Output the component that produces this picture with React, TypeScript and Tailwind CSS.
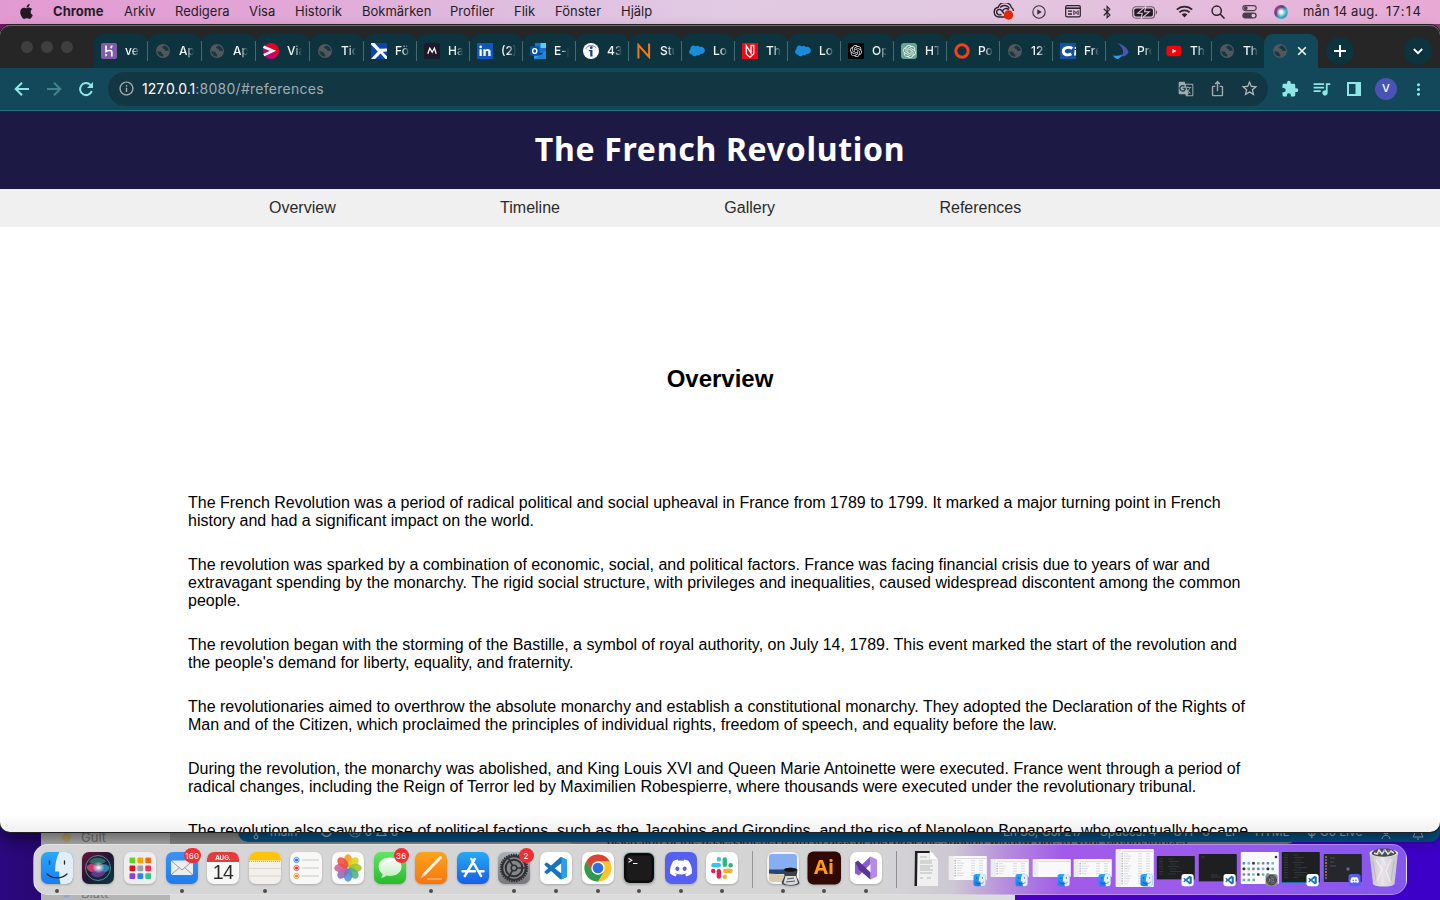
import React from 'react';
import { FaApple, FaBluetoothB, FaDiscord, FaYoutube } from 'react-icons/fa';
import { SiOpenai } from 'react-icons/si';
import { MdExtension, MdGTranslate, MdInfoOutline, MdIosShare, MdMoreVert, MdQueueMusic, MdStarBorder } from 'react-icons/md';

const VSCODE =
  'M23.15 2.587L18.21.21a1.494 1.494 0 0 0-1.705.29l-9.46 8.63-4.12-3.128a.999.999 0 0 0-1.276.057L.327 7.261A1 1 0 0 0 .326 8.74L3.899 12 .326 15.26a1 1 0 0 0 .001 1.479L1.65 17.94a.999.999 0 0 0 1.276.057l4.12-3.128 9.46 8.63a1.492 1.492 0 0 0 1.704.29l4.942-2.377A1.5 1.5 0 0 0 24 20.06V3.939a1.5 1.5 0 0 0-.85-1.352zm-5.146 14.861L10.826 12l7.178-5.448v10.896z';

/* ---------- menu bar ---------- */

const MENUS: [string, string][] = [
  ['Chrome', 'w-[71px] font-bold tracking-[0.05px]'],
  ['Arkiv', 'w-[51px]'],
  ['Redigera', 'w-[74px]'],
  ['Visa', 'w-[46px]'],
  ['Historik', 'w-[67px]'],
  ['Bokmärken', 'w-[88px]'],
  ['Profiler', 'w-[64px]'],
  ['Flik', 'w-[41px]'],
  ['Fönster', 'w-[66px]'],
  ['Hjälp', 'w-[40px]'],
];

function CreativeCloud() {
  return (
    <svg width="22" height="17" viewBox="0 0 22 17" fill="none" stroke="#2b222b" strokeWidth="1.4">
      <path d="M13 14H6A4.900 4.900 0 0 1 5.200 4.300 7 7 0 0 1 18.500 4.500c1.200.900 1.900 2 2 3.500" />
      <path d="M8.500 11.300c-2.500 1.400-5.100-.3-4.900-2.500.3-2.600 3.500-3.200 5-1.300l2.400 3M7.200 4.500c2.500-3 7.500-2.600 9.200 1M9.500 8c1-2.600 4.300-3.200 6.200-1.300" />
      <circle cx="15.500" cy="12" r="4.700" fill="#e3260c" stroke="none" />
    </svg>
  );
}

function PlayCircle() {
  return (
    <svg width="14" height="14" viewBox="0 0 14 14">
      <circle cx="7" cy="7" r="6.200" fill="none" stroke="#3a2f3a" strokeWidth="1.100" />
      <path d="M5.300 4.300v5.400L9.800 7z" fill="#3a2f3a" />
    </svg>
  );
}

function InputPanel() {
  return (
    <svg width="16" height="13" viewBox="0 0 16 13" fill="none" stroke="#2b222b">
      <rect x=".7" y=".7" width="14.600" height="11.200" rx="1.400" strokeWidth="1.200" />
      <path d="M1 3.200h14" strokeWidth="1.600" />
      <path d="M3 6.200h4M3 9h4" strokeWidth="1.300" />
      <path d="M9 5.600l4 4M13 5.600l-4 4M8.800 5.600v4M13.200 5.600v4" strokeWidth=".9" />
    </svg>
  );
}

function Battery() {
  return (
    <svg width="26" height="13" viewBox="0 0 26 13">
      <rect x=".6" y=".8" width="22" height="11.400" rx="3.400" fill="none" stroke="#6b5a69" strokeWidth="1.100" />
      <rect x="2.300" y="2.500" width="18.600" height="8" rx="1.800" fill="#231b23" />
      <path d="M23.800 4.600c1 .4 1.400 1.100 1.400 1.900s-.4 1.500-1.400 1.900z" fill="#6b5a69" />
      <path d="M13.800.4L5.800 7.200h4.400L9.200 12.600l8-6.800h-4.600z" fill="#231b23" stroke="#e3c5e0" strokeWidth="1.100" />
    </svg>
  );
}

function Wifi() {
  return (
    <svg width="17" height="13" viewBox="0 0 17 13" fill="none" stroke="#2b222b" strokeWidth="1.700">
      <path d="M.8 4.700a11 11 0 0 1 15.400 0M3.400 7.400a7.300 7.300 0 0 1 10.200 0" />
      <path d="M8.500 12.400L5.700 9.500a4 4 0 0 1 5.600 0z" fill="#2b222b" stroke="none" />
    </svg>
  );
}

function SearchGlass() {
  return (
    <svg width="14" height="14" viewBox="0 0 14 14" fill="none" stroke="#2b222b" strokeWidth="1.500" strokeLinecap="round">
      <circle cx="5.700" cy="5.700" r="4.600" />
      <path d="M9.100 9.100l3.900 4" />
    </svg>
  );
}

function ControlCenter() {
  return (
    <svg width="15" height="14" viewBox="0 0 15 14">
      <rect x=".8" y=".6" width="13.400" height="5" rx="2.500" fill="none" stroke="#4a3d49" strokeWidth="1.100" />
      <circle cx="3.800" cy="3.100" r="1.900" fill="#4a3d49" />
      <rect x=".3" y="7.600" width="14.400" height="6" rx="3" fill="#4a3d49" />
      <circle cx="11.400" cy="10.600" r="1.900" fill="#e3c3de" />
    </svg>
  );
}

function SiriSmall() {
  return (
    <svg width="14" height="14" viewBox="0 0 14 14">
      <defs>
        <linearGradient id="siriS" x1="0" y1="0" x2="1" y2="1">
          <stop offset="0" stopColor="#e2508c" />
          <stop offset=".35" stopColor="#5a3a7e" />
          <stop offset=".65" stopColor="#33c2c0" />
          <stop offset="1" stopColor="#5467d8" />
        </linearGradient>
        <radialGradient id="siriSG">
          <stop offset="0" stopColor="#fff" />
          <stop offset=".4" stopColor="#fff" stopOpacity=".8" />
          <stop offset="1" stopColor="#fff" stopOpacity="0" />
        </radialGradient>
      </defs>
      <circle cx="7" cy="7" r="6.900" fill="url(#siriS)" />
      <circle cx="7" cy="7" r="5" fill="url(#siriSG)" />
    </svg>
  );
}

function MenuBar() {
  return (
    <div className="flex h-[24px] w-full items-center bg-[linear-gradient(90deg,#e29bd2_0%,#e2a4d6_18%,#dfbcdf_34%,#e1cae3_50%,#e2c8e1_68%,#e5bbdc_85%,#e8a9d5_100%)] pb-[2px] text-[13px] leading-[22px] text-[#261c26]">
      <div className="flex w-[53px] justify-center"><FaApple size={17} color="#211a21" /></div>
      {MENUS.map(([t, c]) => (
        <span key={t} className={c}>{t}</span>
      ))}
      <div className="ml-auto flex items-center">
        <div className="flex w-[37px] justify-center"><CreativeCloud /></div>
        <div className="flex w-[34px] justify-center pt-[2px]"><PlayCircle /></div>
        <div className="flex w-[34px] justify-center pt-[1px]"><InputPanel /></div>
        <div className="flex w-[34px] justify-center pt-[2px]"><FaBluetoothB size={14} color="#2b222b" /></div>
        <div className="flex w-[41px] justify-center pt-[2px]"><Battery /></div>
        <div className="flex w-[38px] justify-center pt-[1px]"><Wifi /></div>
        <div className="flex w-[30px] justify-center pt-[1px]"><SearchGlass /></div>
        <div className="flex w-[33px] justify-center pt-[2px]"><ControlCenter /></div>
        <div className="flex w-[29px] justify-center pt-[2px]"><SiriSmall /></div>
        <span className="ml-[8px] w-[83px] tracking-[0.1px]">mån 14 aug.</span>
        <span className="w-[54px] tracking-[1.3px]">17:14</span>
      </div>
    </div>
  );
}

/* ---------- favicons ---------- */

const Globe = () => (
  <svg width="16" height="16" viewBox="0 0 16 16">
    <circle cx="8" cy="8" r="7" fill="#53565b" />
    <path d="M2.300 8.300c2 .2 3.500.2 4.200 1 .6.900.1 1.500 1.500 1.900l.4 2.300c-3 .4-5.800-1.900-6.100-5.200zM9.200 2.500c-.6 1.100-2.200.9-2.100 2.200.2 1.200 1.500.5 2.400 1.200.8.700 0 1.800 1.300 2 1 .1 1.800-.4 2.900.3.200-2.700-1.600-5-4.500-5.700z" fill="#123944" />
  </svg>
);

const fav: Record<string, () => React.ReactElement> = {
  globe: Globe,
  heroku: () => (
    <svg width="16" height="16" viewBox="0 0 16 16">
      <rect width="16" height="16" rx="2" fill="#7f5ba8" />
      <path d="M5 2.500v6c1.800-1 5.800-1.800 5.800.6v4.400M10.800 2.500c0 1.200-.4 1.900-1.100 2.600" fill="none" stroke="#fff" strokeWidth="1.700" />
      <path d="M4.300 10.300l2.200 1.700-2.200 1.800z" fill="#fff" />
    </svg>
  ),
  viaplay: () => (
    <svg width="16" height="16" viewBox="0 0 16 16">
      <defs>
        <linearGradient id="via" x1="0" y1="1" x2="1" y2="0">
          <stop offset=".3" stopColor="#c4007c" />
          <stop offset=".75" stopColor="#ec0018" />
        </linearGradient>
      </defs>
      <circle cx="8" cy="8" r="8" fill="url(#via)" />
      <path d="M.5 3.700l9.500 4.100L.8 12.200" fill="none" stroke="#fff" strokeWidth="2.600" />
    </svg>
  ),
  fortnox: () => (
    <svg width="16" height="16" viewBox="0 0 16 16">
      <rect width="16" height="16" fill="#0b45b0" />
      <path d="M0 0h3.500l5.300 5.800L16 5.500v3l-4.300.3L16 13.500V16h-1.500L9.500 10.500 4 16H0l6.800-7.600L0 1.500z" fill="#fff" />
    </svg>
  ),
  mdark: () => (
    <svg width="16" height="16" viewBox="0 0 16 16">
      <rect width="16" height="16" rx="2.500" fill="#1c1a2b" />
      <path d="M3.800 10.800L5.800 5.200l2.400 4 2.200-4 1.800 5.600" fill="none" stroke="#fff" strokeWidth="1.300" />
    </svg>
  ),
  linkedin: () => (
    <svg width="16" height="16" viewBox="0 0 16 16">
      <rect width="16" height="16" rx="1" fill="#0f57bd" />
      <path d="M2.500 6.200h2.300V13H2.500zM6.400 6.200h2.200v1c1-1.800 5-1.700 5 1.600V13h-2.300V9.400c0-2-2.600-1.800-2.600 0V13H6.400z" fill="#fff" />
      <circle cx="3.650" cy="3.900" r="1.300" fill="#fff" />
    </svg>
  ),
  outlook: () => (
    <svg width="16" height="16" viewBox="0 0 16 16">
      <rect x="5" width="11" height="10" fill="#1a6fd0" />
      <path d="M10.500 0H16v5h-5.500z" fill="#4fd2f5" />
      <path d="M4 9l6 3.500L16 8v8H4z" fill="#2aa0e8" />
      <path d="M4 16l12-7v7z" fill="#1a84da" />
      <rect y="3.200" width="9.500" height="9.500" rx=".8" fill="#0b53a6" />
      <ellipse cx="4.750" cy="8" rx="2.100" ry="2.400" fill="none" stroke="#fff" strokeWidth="1.400" />
    </svg>
  ),
  info: () => (
    <svg width="16" height="16" viewBox="0 0 16 16">
      <circle cx="8" cy="8" r="8" fill="#fff" />
      <path d="M2.800 5.800C4.500 2.200 9.500 1.400 13 4.600" fill="none" stroke="#4a68b0" strokeWidth=".9" />
      <circle cx="8.300" cy="4.700" r="1.400" fill="#1c3f95" />
      <path d="M5.800 6.900h3.700v6.600H7.200V8.300H5.800z" fill="#1c3f95" />
    </svg>
  ),
  norange: () => (
    <svg width="16" height="16" viewBox="0 0 16 16" fill="none" stroke="#ee7a22" strokeWidth="2">
      <path d="M2.400 15.500V2l10.700 12V.5" />
    </svg>
  ),
  salesforce: () => (
    <svg width="16" height="16" viewBox="0 0 16 16">
      <path d="M6.700 3.400c1.600-1.300 3-.7 3.800.5 2.900-1 5.500 1 5.400 3.700-.1 2.400-2.300 3.900-4.500 3.400-.8 1.300-2.300 1.500-3.400.9-1.300 2.100-4.200 1.700-5-.5C1.200 11.600 0 10 .1 8.500c.1-1 .6-1.700 1.300-2.200C.8 3.400 4.200 1 6.700 3.400z" fill="#1b8bdb" />
    </svg>
  ),
  nred: () => (
    <svg width="16" height="16" viewBox="0 0 16 16">
      <rect width="16" height="16" fill="#f30613" />
      <path d="M4.300 11V2.700l4.700 7.300V2.500h2.800v8.300L8 14.200l-3.500-3" fill="none" stroke="#fff" strokeWidth="1.300" />
    </svg>
  ),
  openai: () => (
    <span className="flex size-[16px] items-center justify-center bg-black"><SiOpenai size={12} color="#e8e8e8" /></span>
  ),
  chatgpt: () => (
    <span className="flex size-[16px] items-center justify-center rounded-[3px] bg-[#6ba392]"><SiOpenai size={13} color="#e6f2ee" /></span>
  ),
  ring: () => (
    <svg width="16" height="16" viewBox="0 0 16 16"><circle cx="8" cy="8" r="6.200" fill="none" stroke="#f2421b" strokeWidth="3" /></svg>
  ),
  cblue: () => (
    <svg width="16" height="16" viewBox="0 0 16 16">
      <rect width="16" height="16" fill="#1650a0" />
      <path d="M12.300 5.500C9.500 3.300 3.300 4.400 3.300 8.300c0 4 5 4.400 8 2.400" fill="none" stroke="#fff" strokeWidth="2.900" />
      <path d="M14.700 7h1.300v5.500h-2z" fill="#fff" />
      <circle cx="15.600" cy="5" r="1.100" fill="#fff" />
    </svg>
  ),
  moon: () => (
    <svg width="16" height="16" viewBox="0 0 16 16">
      <path d="M4.500 0c7 2 11.200 7 11 9.500-1.500 3-5.500 4.500-9 4.300C12 11 11.500 6 4.500 0z" fill="#4b52b8" />
      <path d="M0 12.500c3 .5 6 .3 9-.8-1 2.300-3 4.300-5 4.300-1.800-.8-3.300-2-4-3.500z" fill="#27a0ee" />
    </svg>
  ),
  youtube: () => <FaYoutube size={16} color="#fb0007" className="bg-[linear-gradient(#fff,#fff)] bg-[length:5px_5px] bg-center bg-no-repeat" />,
};

const TABS: [string, string][] = [
  ['heroku', 'ver'], ['globe', 'App'], ['globe', 'App'], ['viaplay', 'Via'], ['globe', 'Tick'], ['fortnox', 'För'],
  ['mdark', 'Har'], ['linkedin', '(2)'], ['outlook', 'E-p'], ['info', '43 '], ['norange', 'Stu'], ['salesforce', 'Log'],
  ['nred', 'The'], ['salesforce', 'Log'], ['openai', 'Ope'], ['chatgpt', 'HTM'], ['ring', 'Pos'], ['globe', '127'],
  ['cblue', 'Fre'], ['moon', 'Pro'], ['youtube', 'The'], ['globe', 'The'],
];

function TabStrip() {
  return (
    <div className="flex h-[43px] items-end bg-[#262626]">
      <div className="flex h-[43px] w-[94px] gap-[8px] pt-[16px] pl-[21px]">
        <i className="size-[12px] rounded-full bg-[#3f3f3f]" />
        <i className="size-[12px] rounded-full bg-[#3f3f3f]" />
        <i className="size-[12px] rounded-full bg-[#3f3f3f]" />
      </div>
      {TABS.map(([icon, label], i) => {
        const Icon = fav[icon];
        return (
          <div key={i} className={`flex h-[34px] shrink-0 items-center rounded-t-[9px] bg-[#0d333e] pl-[7px] ${i < 5 ? 'w-[54px]' : i === 21 ? 'w-[52px]' : 'w-[53px]'}`}>
            <span className="w-[16px] shrink-0"><Icon /></span>
            <span className="ml-[8px] w-[15px] shrink-0 overflow-hidden text-[12px] leading-[18px] font-medium whitespace-nowrap text-[#f4f8f9] [mask-image:linear-gradient(90deg,#000_45%,transparent)]">{label}</span>
            {i < 21 && <i className="ml-auto h-[20px] w-px shrink-0 bg-[#466a74]" />}
          </div>
        );
      })}
      <div className="flex h-[34px] w-[54px] shrink-0 items-center rounded-t-[9px] bg-[#12485a] pl-[8px]">
        <Globe />
        <svg width="10" height="10" viewBox="0 0 10 10" className="ml-[9px]"><path d="M1.200 1.200l7.600 7.600M8.800 1.200L1.200 8.800" stroke="#f3f9fa" strokeWidth="1.600" /></svg>
      </div>
      <div className="mb-[3px] ml-[8px] flex size-[28px] shrink-0 items-center justify-center rounded-full bg-[#0d333e]">
        <svg width="12" height="12" viewBox="0 0 12 12"><path d="M6 0v12M0 6h12" stroke="#fff" strokeWidth="1.900" /></svg>
      </div>
      <div className="mr-[8px] mb-[3px] ml-auto flex size-[28px] shrink-0 items-center justify-center rounded-full bg-[#0d333e]">
        <svg width="10" height="7" viewBox="0 0 10 7"><path d="M.8 1L5 5.200 9.200 1" fill="none" stroke="#fff" strokeWidth="1.900" /></svg>
      </div>
    </div>
  );
}

function Toolbar() {
  return (
    <div className="flex h-[43px] items-center border-b border-[#1f7280] bg-[#12485a] pl-[14px]">
      <svg width="16" height="16" viewBox="0 0 16 16" fill="none" stroke="#8ee7e6" strokeWidth="2" className="mb-[1px] shrink-0">
        <path d="M15 8H2.500M8 1.700L1.700 8 8 14.300" />
      </svg>
      <svg width="16" height="16" viewBox="0 0 16 16" fill="none" stroke="#42838b" strokeWidth="2" className="mb-[1px] ml-[16px] shrink-0">
        <path d="M1 8h12.500M8 1.700L14.300 8 8 14.300" />
      </svg>
      <svg width="16" height="16" viewBox="0 0 16 16" fill="none" stroke="#8ee7e6" strokeWidth="2" className="mb-[1px] ml-[16px] shrink-0">
        <path d="M13.800 10A6 6 0 1 1 12.400 3.900L14 5.500" />
        <path d="M15 1v6H9z" fill="#8ee7e6" stroke="none" />
      </svg>
      <div className="ml-[14px] flex h-[34px] w-[1160px] shrink-0 items-center rounded-full bg-[#133643] pr-[9px] pb-[1px] pl-[10px]">
        <MdInfoOutline size={17} color="#a4a9ad" />
        <span className="ml-[7px] text-[14px] leading-[18px] tracking-[0.27px] text-[#9fadb3]"><span className="tracking-[0] text-white">127.0.0.1</span>:8080/#references</span>
        <MdGTranslate size={16} color="#a4a9ad" className="ml-auto" />
        <MdIosShare size={17} color="#a4a9ad" className="ml-[15px]" />
        <MdStarBorder size={19} color="#b4b8bb" className="ml-[14px]" />
      </div>
      <MdExtension size={18} color="#8ee7e6" className="mb-[1px] ml-[13px]" />
      <MdQueueMusic size={21} color="#8ee7e6" className="mb-[1px] ml-[12px]" />
      <svg width="14" height="14" viewBox="0 0 14 14" className="mb-[1px] ml-[15px]">
        <path d="M0 0h14v14H0zM2 2v10h6.500V2z" fill="#8ee7e6" fillRule="evenodd" />
      </svg>
      <span className="mb-[1px] ml-[14px] flex size-[22px] items-center justify-center rounded-full bg-[#4a53b5] text-[11px] font-medium text-white">V</span>
      <MdMoreVert size={19} color="#8ee7e6" className="ml-[12px]" />
    </div>
  );
}

/* ---------- page ---------- */

const PARAGRAPHS = [
  ['The French Revolution was a period of radical political and social upheaval in France from 1789 to 1799. It marked a major turning point in French', 'history and had a significant impact on the world.'],
  ['The revolution was sparked by a combination of economic, social, and political factors. France was facing financial crisis due to years of war and', 'extravagant spending by the monarchy. The rigid social structure, with privileges and inequalities, caused widespread discontent among the common', 'people.'],
  ['The revolution began with the storming of the Bastille, a symbol of royal authority, on July 14, 1789. This event marked the start of the revolution and', "the people's demand for liberty, equality, and fraternity."],
  ['The revolutionaries aimed to overthrow the absolute monarchy and establish a constitutional monarchy. They adopted the Declaration of the Rights of', 'Man and of the Citizen, which proclaimed the principles of individual rights, freedom of speech, and equality before the law.'],
  ['During the revolution, the monarchy was abolished, and King Louis XVI and Queen Marie Antoinette were executed. France went through a period of', 'radical changes, including the Reign of Terror led by Maximilien Robespierre, where thousands were executed under the revolutionary tribunal.'],
  ['The revolution also saw the rise of political factions, such as the Jacobins and Girondins, and the rise of Napoleon Bonaparte, who eventually became'],
];

function Page() {
  return (
    <div className="font-['Liberation_Sans',Arial,sans-serif] text-black">
      <header className="flex h-[78px] items-center justify-center bg-[#1d1945] pb-[2px]">
        <h1 className="font-['Noto_Sans','Open_Sans',sans-serif] text-[32px] leading-none font-bold tracking-[0.7px] whitespace-nowrap text-white">The French Revolution</h1>
      </header>
      <nav className="flex h-[38px] items-center gap-[164.4px] bg-[#f0f0f0] pl-[269px] text-[16px] text-[#2a2a2a]">
        <a>Overview</a><a>Timeline</a><a>Gallery</a><a>References</a>
      </nav>
      <h2 className="mt-[138px] text-center text-[24px] leading-[28px] font-bold">Overview</h2>
      <div className="mt-[101px] flex flex-col gap-[26px] pl-[188px] text-[16px] leading-[18px] whitespace-nowrap">
        {PARAGRAPHS.map((lines, i) => (
          <p key={i}>{lines.map((l) => <span key={l} className="block">{l}</span>)}</p>
        ))}
      </div>
    </div>
  );
}

/* ---------- dock ---------- */

type AppIcon = { name: string; dot?: boolean; badge?: string; art: React.ReactElement };

const Tile = ({ fill }: { fill: string }) => <rect width="32" height="32" rx="7" fill={fill} />;

function FinderArt() {
  return (
    <>
      <Tile fill="url(#finder)" />
      <path d="M18.500 0H25a7 7 0 0 1 7 7v18a7 7 0 0 1-7 7h-5.500c-1-4-1.300-8-1.300-12.500H14C14 12 15.500 5 18.500 0z" fill="#e4edf6" />
      <path d="M8.500 9v3M23.500 9v3M6 22c5 5.200 15 5.200 20 0" fill="none" stroke="#1d2836" strokeWidth="1.300" strokeLinecap="round" />
    </>
  );
}

const PETALS = ['#f59b1c', '#e3cf18', '#9ec527', '#52b183', '#4b93d8', '#9069b8', '#cf5e98', '#ef4f41'];
const GRID = ['#5ed61f', '#f7a400', '#f06c13', '#d7141a', '#98a2a8', '#f3305a', '#8e3fd0', '#2d86ee', '#33c38f'];

function GearArt() {
  return (
    <g fill="none">
      <circle cx="16" cy="16" r="13" stroke="#303235" strokeWidth="2.600" strokeDasharray="1.500 .9" />
      <circle cx="16" cy="16" r="11.800" fill="#85878a" stroke="#303235" strokeWidth="2.200" />
      <circle cx="16" cy="16" r="8.300" stroke="#2d2f32" strokeWidth="2" />
      <circle cx="16" cy="16" r="2.800" stroke="#2d2f32" strokeWidth="1.500" />
      <path d="M18.800 16h8M14.500 13.600L10.500 6.500M14.500 18.400l-4 7.100" stroke="#2d2f32" strokeWidth="1.700" />
    </g>
  );
}

const APPS: AppIcon[] = [
  { name: 'finder', dot: true, art: <FinderArt /> },
  {
    name: 'siri',
    art: (
      <>
        <Tile fill="url(#siriBg)" />
        <circle cx="16" cy="16" r="12.500" fill="#1c2440" fillOpacity=".6" stroke="#4f9c93" strokeWidth=".9" />
        <path d="M4.500 15c5-7 10.500-1 11.500 1-4 6-9.500 5-11.500-1z" fill="#e0407d" opacity=".85" />
        <path d="M27.500 15c-5-5-9.500-2-11.500 1 5 6 10.500 5 11.500-1z" fill="#37aee0" opacity=".7" />
        <path d="M9 22c3-6 9-7 15-2-4 6-11 7-15 2z" fill="#7d4bb5" opacity=".65" />
        <path d="M7 10c4-5 11-6 17-1-3 4-12 5-17 1z" fill="#35b59a" opacity=".5" />
        <circle cx="16.500" cy="15.500" r="6" fill="url(#glow)" />
      </>
    ),
  },
  {
    name: 'launchpad',
    art: (
      <>
        <Tile fill="#eeedef" />
        {GRID.map((c, i) => <rect key={c} x={5.5 + (i % 3) * 7.9} y={5.5 + Math.floor(i / 3) * 7.9} width="5.800" height="5.800" rx="1.300" fill={c} />)}
      </>
    ),
  },
  {
    name: 'mail', dot: true, badge: '160',
    art: (
      <>
        <Tile fill="url(#mail)" />
        <rect x="5" y="8.500" width="22" height="14.500" rx="1.800" fill="#eceded" />
        <path d="M5.500 9L16 18l10.500-9M5.500 22.500l8-7M26.500 22.500l-8-7" fill="none" stroke="#8d949c" strokeWidth=".9" />
      </>
    ),
  },
  {
    name: 'calendar',
    art: (
      <>
        <Tile fill="#f8f8f6" />
        <path d="M0 10V7a7 7 0 0 1 7-7h18a7 7 0 0 1 7 7v3z" fill="#e23c3c" />
        <text x="16" y="7.800" textAnchor="middle" fontSize="6.200" fontWeight="700" fill="#fff">AUG.</text>
        <text x="16" y="26.800" textAnchor="middle" fontSize="19.500" fontFamily="Liberation Sans, sans-serif" letterSpacing="-.6" fill="#2b2b2b">14</text>
      </>
    ),
  },
  {
    name: 'notes', dot: true,
    art: (
      <>
        <Tile fill="#f3f0eb" />
        <path d="M0 8.500V7a7 7 0 0 1 7-7h18a7 7 0 0 1 7 7v1.500z" fill="#fcc40b" />
        <path d="M0 16.500h32M0 24h32" stroke="#d9d5cf" />
        <path d="M0 9.500h32" stroke="#b5afa4" strokeDasharray="1 1" />
      </>
    ),
  },
  {
    name: 'reminders',
    art: (
      <>
        <Tile fill="#f8f8f7" />
        {['#2877ea', '#e33c35', '#ee8b22'].map((c, i) => (
          <g key={c}>
            <circle cx="6.500" cy={8 + i * 8} r="2.600" fill="#fff" stroke={c} strokeWidth=".8" />
            <circle cx="6.500" cy={8 + i * 8} r="1.600" fill={c} />
            <path d={`M12 ${8 + i * 8}h17`} stroke="#c8c8c8" />
          </g>
        ))}
      </>
    ),
  },
  {
    name: 'photos',
    art: (
      <>
        <Tile fill="#fafafa" />
        {PETALS.map((c, i) => <ellipse key={c} cx="16" cy="8.800" rx="4.300" ry="6.600" fill={c} opacity=".88" transform={`rotate(${i * 45} 16 16)`} />)}
      </>
    ),
  },
  {
    name: 'messages', badge: '36',
    art: (
      <>
        <Tile fill="url(#msg)" />
        <path d="M16 5.500c6.800 0 11.500 4 11.500 9.300S22.800 24 16 24c-1.300 0-2.500-.1-3.600-.4-1.500 1.400-3.500 2.200-5.600 2.300 1.200-1.200 1.700-2.600 1.700-4C6 20.200 4.500 17.700 4.500 14.800 4.500 9.500 9.200 5.500 16 5.500z" fill="url(#bubble)" />
      </>
    ),
  },
  {
    name: 'pages', dot: true,
    art: (
      <>
        <Tile fill="url(#pages)" />
        <path d="M25.500 5.500L9 22.500" stroke="#f4f1ed" strokeWidth="3" strokeLinecap="round" />
        <path d="M8.500 21l2 2-5 3.500z" fill="#dedad5" />
        <path d="M12 27h15" stroke="#ffd9ab" strokeWidth=".9" />
      </>
    ),
  },
  {
    name: 'appstore',
    art: (
      <>
        <Tile fill="url(#store)" />
        <g stroke="#fff" strokeWidth="2.500" strokeLinecap="round">
          <path d="M17.700 7L9 22M14.300 7l9.800 17M5.500 19.300h12.300M22.500 19.300h4M7.800 24l.3-.5" />
        </g>
      </>
    ),
  },
  { name: 'settings', dot: true, badge: '2', art: <><Tile fill="url(#grey)" /><GearArt /></> },
  {
    name: 'vscode', dot: true,
    art: (
      <>
        <Tile fill="#fff" />
        <g transform="translate(4.500 5) scale(.94)">
          <path d={VSCODE} fill="#1673bd" />
          <path d="M18 .3l5.200 2.300c.5.300.8.800.8 1.400v16c0 .6-.3 1.100-.8 1.400L18 23.800z" fill="#2b9fec" />
        </g>
      </>
    ),
  },
  {
    name: 'chrome', dot: true,
    art: (
      <>
        <Tile fill="#fff" />
        <circle cx="16" cy="16" r="13.500" fill="#f9c52c" />
        <path d="M4.300 9.250A13.500 13.500 0 0 1 27.700 9.250H16L10.100 19.400z" fill="#dd4237" />
        <path d="M4.300 9.250L10.150 19.400 16 22.700l5.850-3.300L16 29.500A13.500 13.500 0 0 1 4.300 9.250z" fill="#2e9c4e" />
        <circle cx="16" cy="16" r="6.700" fill="#fff" />
        <circle cx="16" cy="16" r="5.300" fill="#2e6fe4" />
      </>
    ),
  },
  {
    name: 'terminal', dot: true,
    art: (
      <>
        <Tile fill="#9fb0b2" />
        <rect x="1" y="1" width="30" height="30" rx="6" fill="#0c0c0c" />
        <rect x="3.500" y="3.500" width="25" height="25" rx="4" fill="#1b1b1b" />
        <path d="M5.500 6.200l3.300 2-3.300 2M10 11.500h4.500" fill="none" stroke="#f1f1f1" strokeWidth="1.100" />
      </>
    ),
  },
  { name: 'discord', dot: true, art: <><Tile fill="#5560f0" /><g transform="translate(4 4)"><FaDiscord size={24} color="#fff" /></g></> },
  {
    name: 'slack', dot: true,
    art: (
      <>
        <Tile fill="#fff" />
        <g strokeWidth="4.400" strokeLinecap="round" fill="none">
          <path d="M7.500 13.200h5.300" stroke="#36c5f0" /><path d="M12.900 7.300v.1" stroke="#36c5f0" />
          <path d="M18.800 7.500v5.300" stroke="#2eb67d" /><path d="M24.600 13.200h.1" stroke="#2eb67d" />
          <path d="M24.500 19h-5.300" stroke="#ecb22e" /><path d="M18.800 24.700v.1" stroke="#ecb22e" />
          <path d="M12.900 24.500v-5.300" stroke="#e01e5a" /><path d="M7.200 19h.1" stroke="#e01e5a" />
        </g>
      </>
    ),
  },
];

const APPS2: AppIcon[] = [
  {
    name: 'preview', dot: true,
    art: (
      <>
        <rect x="0" width="32" height="32" rx="7" fill="#f2f2f0" />
        <path d="M2 5a3 3 0 0 1 3-3h22a3 3 0 0 1 3 3v14H2z" fill="#86aef0" />
        <path d="M2 17.500h28V22H2z" fill="#26456f" />
        <path d="M2 21.500l28 2V27a3 3 0 0 1-3 3H5a3 3 0 0 1-3-3z" fill="#dcc9b2" />
        <path d="M16.500 18c0-3 14-3 14 0l-1 6 3 7c-1 3.500-17 3.500-18 0l3-7z" fill="#3d4144" />
        <ellipse cx="23.500" cy="17.800" rx="6.500" ry="2" fill="#101214" />
        <path d="M18.500 24h10.500l2 7c-3 2.500-12 2.500-14.500 0z" fill="#d8dbdc" />
        <path d="M20 27l7-1M19 30l9-1" stroke="#54585c" />
      </>
    ),
  },
  {
    name: 'illustrator', dot: true,
    art: <><rect x="-.5" y="-.5" width="33.500" height="33" rx="6" fill="#300a02" /><text x="16" y="22.300" textAnchor="middle" fontSize="20" fontWeight="700" fontFamily="Noto Sans, sans-serif" fill="#ff9a13">Ai</text></>,
  },
  {
    name: 'visualstudio', dot: true,
    art: (
      <>
        <Tile fill="#fff" />
        <path d="M20.500 4.500L27 7.500v17l-6.500 3z" fill="#b48bea" />
        <path d="M20.500 4.500v7.500L9 23.500l-4-2V19L20.500 4.500z" fill="#8a5ed0" />
        <path d="M5 10.500l3-2 12.500 12v7L8 17z" fill="#5b3595" />
        <path d="M5 10.500l3.500 5.500L5 21.500z" fill="#8661c5" />
      </>
    ),
  },
];

function Gradients() {
  const g: [string, string, string][] = [
    ['finder', '#29a8fb', '#1a7df0'], ['mail', '#3d92f7', '#1f7ceb'], ['msg', '#61e662', '#27bb2b'], ['bubble', '#ffffff', '#c2ebbf'],
    ['pages', '#fca21c', '#f7750e'], ['store', '#25a9f7', '#1a5fe6'], ['grey', '#a9b2b9', '#77777a'],
  ];
  return (
    <svg width="0" height="0" className="absolute">
      <defs>
        {g.map(([id, a, b]) => (
          <linearGradient key={id} id={id} x1="0" y1="0" x2="0" y2="1"><stop offset="0" stopColor={a} /><stop offset="1" stopColor={b} /></linearGradient>
        ))}
        <linearGradient id="siriBg" x1="0" y1="0" x2="1" y2="1"><stop offset="0" stopColor="#6d1338" /><stop offset=".5" stopColor="#201733" /><stop offset="1" stopColor="#0e3844" /></linearGradient>
        <radialGradient id="glow"><stop offset="0" stopColor="#fff" /><stop offset="1" stopColor="#fff" stopOpacity="0" /></radialGradient>
        <linearGradient id="bin" x1="0" y1="0" x2="1" y2="0"><stop offset="0" stopColor="#c3bfc9" /><stop offset=".45" stopColor="#e6e4e8" /><stop offset="1" stopColor="#c6c1cd" /></linearGradient>
      </defs>
    </svg>
  );
}

function DockApp({ app }: { app: AppIcon }) {
  return (
    <div className="relative flex h-full w-[41.6px] shrink-0 flex-col items-center pt-[7px]">
      <svg width="32" height="32" viewBox="0 0 32 32" className="shrink-0 overflow-visible drop-shadow-[0_1px_1px_rgba(0,0,0,0.2)]">{app.art}</svg>
      {app.dot && <i className="mt-[5px] size-[4px] rounded-full bg-[#4d4d4f]" />}
      {app.badge && (
        <span className={`absolute top-[3px] flex h-[15px] items-center justify-center rounded-full bg-[#ee2f35] text-[8px] tracking-[0.2px] text-white ${app.badge === '160' ? 'left-[23px] w-[17px]' : 'left-[25px] w-[15px]'}`}>{app.badge}</span>
      )}
    </div>
  );
}

type Thumb = { y: number; h: number; kind: 'light' | 'code' | 'grid' | 'chat'; badge: 'finder' | 'vscode' | 'gear' | 'discord' };

const THUMBS: Thumb[] = [
  { y: 12, h: 24, kind: 'light', badge: 'finder' },
  { y: 15, h: 18, kind: 'light', badge: 'finder' },
  { y: 15, h: 18, kind: 'light', badge: 'finder' },
  { y: 15, h: 18, kind: 'light', badge: 'finder' },
  { y: 5, h: 38, kind: 'light', badge: 'finder' },
  { y: 12, h: 24, kind: 'code', badge: 'vscode' },
  { y: 10, h: 28, kind: 'code', badge: 'vscode' },
  { y: 8, h: 32, kind: 'grid', badge: 'gear' },
  { y: 8, h: 31, kind: 'code', badge: 'vscode' },
  { y: 10, h: 28, kind: 'chat', badge: 'discord' },
];

function ThumbArt({ t, i }: { t: Thumb; i: number }) {
  const rows = Math.floor((t.h - 5) / 2.5);
  const sparse = i === 2 || i === 6;
  return (
    <svg width="41.6" height="51" viewBox="0 0 41.6 51" className="-mt-px shrink-0">
      <rect x="1.8" y={t.y} width="38" height={t.h} rx=".8" fill={t.kind === 'light' || t.kind === 'grid' ? '#f9f8fa' : t.kind === 'code' ? '#1e1f20' : '#26272d'} />
      {t.kind === 'light' && (
        <>
          <rect x="1.8" y={t.y} width="5" height={t.h} fill="#ecebee" />
          <path d={`M8 ${t.y + 2.5}h31`} stroke="#dedce0" />
          {!sparse && Array.from({ length: rows }, (_, r) => (
            <g key={r}>
              <rect x="7.500" y={t.y + 4 + r * 2.5} width="1.300" height="1.300" fill={(r + i) % 3 ? '#8bbcdc' : '#cf8f7c'} />
              <path d={`M10 ${t.y + 4.6 + r * 2.5}h${4 + ((r * 3) % 4)}M24 ${t.y + 4.6 + r * 2.5}h4M32 ${t.y + 4.6 + r * 2.5}h4`} stroke="#d0cfd3" strokeWidth=".7" />
            </g>
          ))}
        </>
      )}
      {t.kind === 'code' && (
        <>
          <path d={`M2 ${t.y + t.h - 0.5}h38`} stroke="#1371b4" />
          {!sparse && Array.from({ length: rows }, (_, r) => (
            <path key={r} d={`M4 ${t.y + 3 + r * 2.5}h4M${13 + (r % 3)} ${t.y + 3 + r * 2.5}h${5 + ((r * 5) % 9)}`} stroke={r % 2 ? '#3a434b' : '#33433b'} strokeWidth=".7" />
          ))}
          {sparse && <path d={`M4 ${t.y + 3}h4M14 ${t.y + 21}h7M14 ${t.y + 23}h10`} stroke="#42474d" strokeWidth=".7" />}
        </>
      )}
      {t.kind === 'grid' && (
        <>
          {Array.from({ length: 20 }, (_, n) => (
            <rect key={n} x={3.6 + (n % 7) * 4.8} y={t.y + 10 + Math.floor(n / 7) * 5.6} width="2.600" height="2.600" rx=".7" fill={['#4d8fd2', '#77b7dc', '#2b2d31', '#66b98b', '#7f8790'][n % 5]} />
          ))}
          <circle cx="37" cy={t.y + 5} r="1.300" fill="#333" />
          <path d={`M3.600 ${t.y + 28}h2.500M8.500 ${t.y + 28}h2.500M13.500 ${t.y + 28}h2.500`} stroke="#59c08a" strokeWidth="2.500" />
        </>
      )}
      {t.kind === 'chat' && (
        <>
          {Array.from({ length: 8 }, (_, n) => <circle key={n} cx="4" cy={t.y + 3 + n * 3} r=".9" fill={['#d96b5b', '#6676e8', '#c9a34e'][n % 3]} />)}
          <path d={`M8 ${t.y + 4}h5M8 ${t.y + 8}h4M8 ${t.y + 12}h6`} stroke="#555963" strokeWidth=".8" />
          <circle cx="26" cy={t.y + 15} r="1.700" fill="#666b76" />
        </>
      )}
      <g transform="translate(26.500 30) scale(.38)">
        {t.badge === 'finder' && <FinderArt />}
        {t.badge === 'vscode' && <><Tile fill="#fff" /><g transform="translate(5 5) scale(.92)"><path d={VSCODE} fill="#1673bd" /></g></>}
        {t.badge === 'gear' && <><Tile fill="#8b8e91" /><GearArt /></>}
        {t.badge === 'discord' && <><Tile fill="#5560f0" /><g transform="translate(4 4)"><FaDiscord size={24} color="#fff" /></g></>}
      </g>
    </svg>
  );
}

function Trash() {
  return (
    <svg width="41.6" height="51" viewBox="0 0 41.6 51" className="-mt-px shrink-0">
      <path d="M6.500 9l3.500 31c.5 3.400 21 3.400 21.500 0L35 9z" fill="url(#bin)" />
      <path d="M13 16l6 9-5 12M28 15l-5 12 4 11M19 14l4 8" fill="none" stroke="#f3f2f4" strokeWidth="1.500" opacity=".7" />
      <path d="M10 17l3 20M31 17l-3 20" stroke="#b3adbb" strokeWidth="1" opacity=".7" />
      <ellipse cx="20.800" cy="9" rx="14.200" ry="4" fill="#eeeef0" />
      <path d="M8.500 10c1-4.500 7-6 12-5.500 6-.5 12 1.500 13 5-5 4-20 4.500-25 .5z" fill="#484c4e" />
      <path d="M11 9l3 1 2-4 3 4 3-4 3 4 3-3 3 2" fill="none" stroke="#e4e6e6" strokeWidth="1.500" />
      <path d="M15 10l2-1M25 6l2 2" stroke="#b1713d" strokeWidth="1.500" />
      <path d="M20 6l2 1" stroke="#4aa3c9" strokeWidth="1.500" />
    </svg>
  );
}

function Dock() {
  return (
    <div className="absolute top-[844px] left-[33px] flex h-[51px] w-[1374px] rounded-[15px] border border-white/30 bg-[linear-gradient(90deg,#d6d6d6_0%,#d4d4d5_62%,#cdc8d2_67%,#b58bdd_71%,#a15be8_75%,#9a5bec_85%,#8457ee_100%)] pl-[2px] font-['Inter',sans-serif]">
      <Gradients />
      {APPS.map((a) => <DockApp key={a.name} app={a} />)}
      <div className="flex w-[18.7px] shrink-0 justify-center pt-[6px]"><i className="h-[37px] w-px bg-[#96969a]" /></div>
      {APPS2.map((a) => <DockApp key={a.name} app={a} />)}
      <div className="flex w-[19.2px] shrink-0 justify-center pt-[6px]"><i className="h-[37px] w-px bg-[#8d8d92]" /></div>
      <svg width="41.6" height="51" viewBox="0 0 41.6 51" className="-mt-px shrink-0">
        <path d="M8.500 42L9 7h17v35z" fill="#1d1d1f" />
        <path d="M11.500 9H24l8 6v27H11z" fill="#f0f0f0" />
        <path d="M24 5.500l8.500 10.500-9-.5z" fill="#fff" stroke="#c6c6c6" strokeWidth=".5" />
        <path d="M14 13h7M14 17h12M14 19h12M14 22h13M14 24h10M14 26h13M14 29h12M14 34h3M21 34h4" stroke="#a7aaa9" strokeWidth=".8" />
      </svg>
      {THUMBS.map((t, i) => <ThumbArt key={i} t={t} i={i} />)}
      <Trash />
    </div>
  );
}

/* ---------- windows behind ---------- */

function BackWindows() {
  return (
    <>
      <div className="absolute top-[800px] left-[41px] flex h-[100px] w-[974px] bg-[#dcdcdc] font-['Inter',sans-serif] text-[13px] text-[#777]">
        <div className="flex h-full w-[129px] flex-col bg-[#b5b5b5]">
          <div className="mt-[28px] flex h-[20px] items-center gap-[10px] pl-[21px]"><i className="size-[9px] rounded-full bg-[#c1a869]" />Gult</div>
          <div className="mt-[36px] flex h-[20px] items-center gap-[10px] pl-[21px]"><i className="size-[9px] rounded-full bg-[#8cabdb]" />Blått</div>
        </div>
        <div className="h-[44px] flex-1 bg-[#8d8d8d]" />
      </div>
      <div className="absolute top-[800px] left-[565px] h-[44px] w-[732px] overflow-hidden rounded-b-[10px] bg-[#77757a] font-['Liberation_Sans',sans-serif] text-[13px] text-[#1f1f22]">
        <p className="mt-[34px] ml-[42px] leading-[14px] tracking-[-0.03px] whitespace-nowrap">discretion of the assessments team to accept this past the support window due to your circumstances</p>
      </div>
      <div className="absolute top-[800px] left-[238px] flex h-[42px] w-[1202px] items-end rounded-b-[10px] bg-[#04548a] pb-[2px] pl-[12px] font-['Inter',sans-serif] text-[12px] leading-[16px] whitespace-nowrap text-[#a9c2d3]">
        <svg width="12" height="16" viewBox="0 0 12 16" fill="none" stroke="#a9c2d3" className="shrink-0"><circle cx="6" cy="13" r="2" /><path d="M6 11V2M10 3c0 4-4 3-4 7" /></svg>
        <span className="ml-[8px] w-[50px] shrink-0">main</span>
        <span className="w-[29px] shrink-0 text-[14px]">○</span>
        <span className="w-[654px] shrink-0">ⓧ 0 △ 0</span>
        <span className="w-[97px] shrink-0">Ln 38, Col 217</span>
        <span className="w-[73px] shrink-0">Spaces: 4</span>
        <span className="w-[52px] shrink-0">UTF-8</span>
        <span className="w-[30px] shrink-0">LF</span>
        <span className="w-[52px] shrink-0">HTML</span>
        <span className="w-[73px] shrink-0">ψ Go Live</span>
        <svg width="12" height="14" viewBox="0 0 12 14" fill="none" stroke="#a9c2d3" className="shrink-0"><circle cx="6" cy="5" r="3" /><path d="M2 13c1-5 7-5 8 0" /></svg>
        <svg width="12" height="14" viewBox="0 0 12 14" fill="none" stroke="#a9c2d3" className="ml-[20px] shrink-0"><path d="M1 11h10L9.500 8V4a3.500 3.500 0 0 0-7 0v4zM5 13h2" /></svg>
      </div>
    </>
  );
}

export default function App() {
  return (
    <div className="relative h-[900px] w-[1440px] overflow-hidden bg-[linear-gradient(90deg,#2b087e_0%,#27066f_4%,#4a00c4_70%,#3c00c8_100%)] font-['Inter',sans-serif]">
      <div className="h-[30px] bg-[linear-gradient(90deg,#7c106f,#3d1630_30%,#2c2c38_60%,#8c3c70)]">
        <MenuBar />
      </div>
      <BackWindows />
      <main className="absolute top-[25px] left-0 h-[807px] w-[1440px] overflow-hidden rounded-[10px] bg-white shadow-[0_0_0_1px_#222,0_8px_16px_rgba(0,0,0,0.45)]">
        <TabStrip />
        <Toolbar />
        <Page />
        <div className="absolute inset-x-0 top-0 h-[20px] rounded-t-[10px] border-t border-[#6b6b6b]" />
        <div className="absolute inset-x-0 bottom-0 h-[18px] bg-[linear-gradient(180deg,transparent,rgba(0,0,0,0.06))]" />
      </main>
      <Dock />
    </div>
  );
}
